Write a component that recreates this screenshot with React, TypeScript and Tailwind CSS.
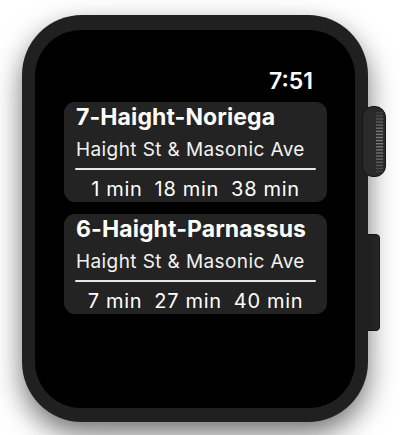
import React from "react";

type Route = { name: string; stop: string; times: string[] };

const routes: Route[] = [
  { name: "7-Haight-Noriega", stop: "Haight St & Masonic Ave", times: ["1 min", "18 min", "38 min"] },
  { name: "6-Haight-Parnassus", stop: "Haight St & Masonic Ave", times: ["7 min", "27 min", "40 min"] },
];

function Crown() {
  const ridges = Array.from({ length: 20 }, (_, i) => i);
  return (
    <div className="absolute left-[340px] top-[91px] w-[24px] h-[71px] rounded-[11px] bg-[#2a2a2a] border border-[#141414] overflow-hidden">
      <svg width="24" height="71" viewBox="0 0 24 71" className="absolute left-[-1px] top-[-1px]">
        {ridges.map((i) => {
          const y = 6 + i * 3.1;
          const d = Math.abs(y - 35.5) / 35.5;
          const op = Math.max(0, 0.85 - d * d * 0.9);
          return <rect key={i} x="14" y={y} width="7" height="1.4" fill="#8a8a8a" opacity={op} />;
        })}
      </svg>
    </div>
  );
}

function Card({ r }: { r: Route }) {
  return (
    <div className="w-[263px] h-[100px] rounded-[11px] bg-[#232323] px-[12px] pt-[1px]">
      <div className="h-[28px] leading-[28px] text-[23px] font-bold text-white tracking-[0.1px] whitespace-nowrap">
        {r.name}
      </div>
      <div className="h-[37px] leading-[37px] text-[19px] text-[#f2f2f2] tracking-[0.4px] whitespace-nowrap">
        {r.stop}
      </div>
      <div className="h-[2px] mx-[-1px] bg-[#e8e8e8] rounded-full" />
      <div className="mt-[6px] h-[26px] leading-[26px] text-[20px] text-white flex justify-center gap-[12px] tracking-[0.7px] whitespace-nowrap">
        {r.times.map((t) => (
          <span key={t}>{t}</span>
        ))}
      </div>
    </div>
  );
}

export default function App() {
  return (
    <div className="w-[400px] h-[435px] bg-white overflow-hidden pl-[22px] pt-[15px] [font-family:Inter,'Liberation_Sans',sans-serif]">
      <div className="relative w-[346px] h-[407px]">
        {/* side button (behind body) */}
        <div className="absolute left-[342px] top-[219px] w-[16px] h-[97px] rounded-r-[4px] bg-[#2c2c2c] border border-[#1a1a1a]" />
        <div className="relative w-[346px] h-[407px] rounded-[60px] bg-[#202020] pl-[13px] pt-[15px] shadow-[0_12px_28px_rgba(0,0,0,0.55)]">
          <div className="w-[320px] h-[378px] rounded-[46px] bg-black flex flex-col items-start pl-[29px] pt-[37px]">
            <div className="w-[249px] h-[28px] leading-[28px] text-right text-[23px] font-semibold text-white">
              7:51
            </div>
            <div className="mt-[7px] flex flex-col gap-[12px]">
              {routes.map((r) => (
                <Card key={r.name} r={r} />
              ))}
            </div>
          </div>
        </div>
        <Crown />
      </div>
    </div>
  );
}
